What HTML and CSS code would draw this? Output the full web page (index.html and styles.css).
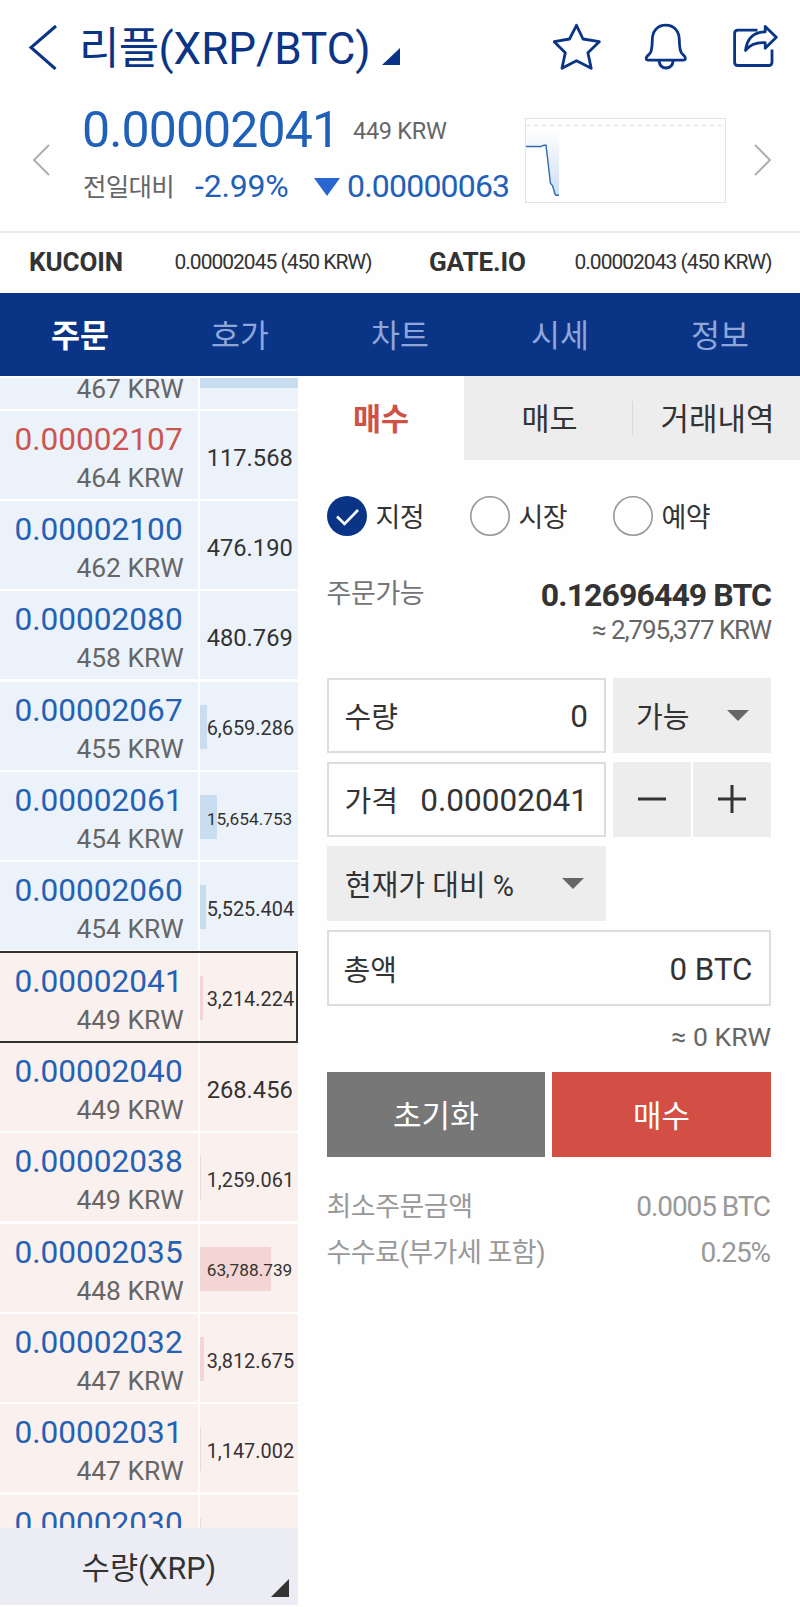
FILE: index.html
```html
<!DOCTYPE html>
<html lang="ko">
<head>
    <meta charset="UTF-8">
    <meta name="viewport" content="width=device-width, initial-scale=1.0">
    <title>리플(XRP/BTC)</title>
    <link rel="stylesheet" href="styles.css">
</head>
<body>

<header class="topbar">
    <svg class="back" width="30" height="46" viewBox="0 0 30 46"><path d="M28 2L3 23.5L27.500 45"/></svg>
    <h1>리플<span>(XRP/BTC)</span></h1>
    <svg class="corner" width="18" height="17" viewBox="0 0 18 17"><path d="M18 0V17H0Z"/></svg>
    <div class="actions">
        <svg width="48" height="48" viewBox="0 0 48 48"><path d="M23.500 2.300L30 16L46.300 18.700L34.900 29.700L38.200 45.300L23.500 37.700L9 45.300L12.300 29.700L1.200 18.700L16.500 16Z"/></svg>
        <svg width="48" height="48" viewBox="0 0 48 48"><path d="M23.700 2.200C15.500 2.200 10.500 8 10.300 16.500C10.200 23 9.900 27.500 8.200 30C6.500 32.300 4.200 33.300 4.200 35.300C4.200 36.700 5 37.200 6.500 37.200H41C42.500 37.200 43.400 36.700 43.400 35.300C43.400 33.300 41.200 32.300 39.500 30C37.800 27.500 37.400 23 37.300 16.500C37.100 8 31.900 2.200 23.700 2.200Z"/><path d="M17 37.500C17.500 42 20 45 24 45C28 45 30.700 42 31.200 37.500"/></svg>
        <svg width="48" height="48" viewBox="0 0 48 48"><path d="M25.500 7.200H6C3.600 7.200 2.600 8.200 2.600 10.500V39.200C2.600 41.500 3.600 42.500 6 42.500H36.500C38.900 42.500 40 41.500 40 39.200V26.500"/><path d="M13.500 27.500C15 15.500 22 9 33.200 8.800V3.500L44.300 14.300L33.200 25.300V19.700C24.500 19.200 18 21.500 13.500 27.500Z"/></svg>
    </div>
</header>

<section class="ticker">
    <svg class="arrow" width="18" height="32" viewBox="0 0 18 32"><path d="M17 1L2 16L17 31"/></svg>
    <div class="info">
        <div class="line">
            <span class="now">0.00002041</span>
            <span class="krw">449 KRW</span>
        </div>
        <div class="line second">
            <span class="label">전일대비</span>
            <span class="rate">-2.99%</span>
            <svg width="26" height="18" viewBox="0 0 26 18"><path d="M0 0H26L13 18Z"/></svg>
            <span class="diff">0.00000063</span>
        </div>
    </div>
    <svg class="chart" width="201" height="85" viewBox="0 0 201 85">
        <defs>
            <linearGradient id="fade" x1="0" y1="0" x2="0" y2="1">
                <stop offset="0" stop-color="#ffffff"/>
                <stop offset="1" stop-color="#cddff3"/>
            </linearGradient>
        </defs>
        <path fill="url(#fade)" d="M1 10H34V77H29L27 67L25 65L21 27L17 28H1Z"/>
        <path class="dash" d="M1 7.500H200"/>
        <path class="trend" d="M1 28.500H16L19 27.200H21L25.500 65.500L27.500 67.500L30 76L31 77.300H34"/>
        <rect x="0.500" y="0.500" width="200" height="84"/>
    </svg>
    <svg class="arrow" width="18" height="32" viewBox="0 0 18 32"><path d="M1 1L16 16L1 31"/></svg>
</section>

<section class="compare">
    <div><b>KUCOIN</b><span>0.00002045 (450 KRW)</span></div>
    <div><b>GATE.IO</b><span>0.00002043 (450 KRW)</span></div>
</section>

<nav class="tabs">
    <a class="active">주문</a>
    <a>호가</a>
    <a>차트</a>
    <a>시세</a>
    <a>정보</a>
</nav>

<main class="content">
    <aside class="book">
        <div class="orders">
            <div class="order ask cut">
                <div class="price"><small>467 KRW</small></div>
                <div class="amount"><i style="width: 100%"></i></div>
            </div>
            <div class="order ask up">
                <div class="price"><strong>0.00002107</strong><small>464 KRW</small></div>
                <div class="amount short"><span>117.568</span></div>
            </div>
            <div class="order ask">
                <div class="price"><strong>0.00002100</strong><small>462 KRW</small></div>
                <div class="amount short"><span>476.190</span></div>
            </div>
            <div class="order ask">
                <div class="price"><strong>0.00002080</strong><small>458 KRW</small></div>
                <div class="amount short"><span>480.769</span></div>
            </div>
            <div class="order ask">
                <div class="price"><strong>0.00002067</strong><small>455 KRW</small></div>
                <div class="amount"><i style="width: 7.6%"></i><span>6,659.286</span></div>
            </div>
            <div class="order ask">
                <div class="price"><strong>0.00002061</strong><small>454 KRW</small></div>
                <div class="amount long"><i style="width: 17.4%"></i><span>15,654.753</span></div>
            </div>
            <div class="order ask">
                <div class="price"><strong>0.00002060</strong><small>454 KRW</small></div>
                <div class="amount"><i style="width: 6.2%"></i><span>5,525.404</span></div>
            </div>
            <div class="order bid current">
                <div class="price"><strong>0.00002041</strong><small>449 KRW</small></div>
                <div class="amount"><i style="width: 3%"></i><span>3,214.224</span></div>
            </div>
            <div class="order bid">
                <div class="price"><strong>0.00002040</strong><small>449 KRW</small></div>
                <div class="amount short"><span>268.456</span></div>
            </div>
            <div class="order bid">
                <div class="price"><strong>0.00002038</strong><small>449 KRW</small></div>
                <div class="amount"><i style="width: 0.6%"></i><span>1,259.061</span></div>
            </div>
            <div class="order bid">
                <div class="price"><strong>0.00002035</strong><small>448 KRW</small></div>
                <div class="amount long"><i style="width: 72%"></i><span>63,788.739</span></div>
            </div>
            <div class="order bid">
                <div class="price"><strong>0.00002032</strong><small>447 KRW</small></div>
                <div class="amount"><i style="width: 4%"></i><span>3,812.675</span></div>
            </div>
            <div class="order bid">
                <div class="price"><strong>0.00002031</strong><small>447 KRW</small></div>
                <div class="amount"><i style="width: 0.6%"></i><span>1,147.002</span></div>
            </div>
            <div class="order bid">
                <div class="price"><strong>0.00002030</strong></div>
                <div class="amount"><i style="width: 0.6%"></i></div>
            </div>
        </div>
        <div class="unit">
            <span>수량(XRP)</span>
            <svg width="18" height="18" viewBox="0 0 18 18"><path d="M18 0V18H0Z"/></svg>
        </div>
    </aside>

    <section class="trade">
        <div class="trade-tabs">
            <a class="active">매수</a>
            <a class="sell">매도</a>
            <a class="history">거래내역</a>
        </div>

        <div class="form">
            <div class="types">
                <label class="checked">
                    <svg width="40" height="40" viewBox="0 0 40 40"><circle cx="20" cy="20" r="20"/><path d="M10 20.500L17.500 28L31 14"/></svg>
                    지정
                </label>
                <label>
                    <svg width="40" height="40" viewBox="0 0 40 40"><circle cx="20" cy="20" r="19.200"/></svg>
                    시장
                </label>
                <label>
                    <svg width="40" height="40" viewBox="0 0 40 40"><circle cx="20" cy="20" r="19.200"/></svg>
                    예약
                </label>
            </div>

            <div class="balance">
                <span class="name">주문가능</span>
                <div>
                    <strong>0.12696449 BTC</strong>
                    <small>≈ 2,795,377 KRW</small>
                </div>
            </div>

            <div class="fields">
                <div class="field"><span>수량</span><em>0</em></div>
                <div class="select">
                    <span>가능</span>
                    <svg width="22" height="11" viewBox="0 0 22 11"><path d="M0 0H22L11 11Z"/></svg>
                </div>
                <div class="field"><span>가격</span><em>0.00002041</em></div>
                <div class="steps">
                    <button><svg width="30" height="30" viewBox="0 0 30 30"><path d="M1 15H29"/></svg></button>
                    <button><svg width="30" height="30" viewBox="0 0 30 30"><path d="M1 15H29M15 1V29"/></svg></button>
                </div>
                <div class="select percent">
                    <span>현재가 대비 %</span>
                    <svg width="22" height="11" viewBox="0 0 22 11"><path d="M0 0H22L11 11Z"/></svg>
                </div>
                <div class="field total"><span>총액</span><em>0 BTC</em></div>
            </div>

            <p class="approx">≈ 0 KRW</p>

            <div class="buttons">
                <button class="reset">초기화</button>
                <button class="buy">매수</button>
            </div>

            <dl class="notes">
                <dt>최소주문금액</dt>
                <dd>0.0005 BTC</dd>
                <dt>수수료(부가세 포함)</dt>
                <dd>0.25%</dd>
            </dl>
        </div>
    </section>
</main>

</body>
</html>
```
FILE: styles.css
```css
* {
    margin: 0;
    padding: 0;
    box-sizing: border-box;
}

body {
    width: 800px;
    height: 1607px;
    overflow: hidden;
    background-color: #fefefe;
    color: #333;
    font-family: Roboto, "Noto Sans CJK KR", sans-serif;
}

svg {
    display: block;
    flex-shrink: 0;
}

button {
    border: none;
    font-family: inherit;
}

/* Header */
.topbar {
    display: flex;
    align-items: center;
    height: 98px;
    padding: 0 21px 0 28px;
    color: #0a3586;
}

.topbar .back {
    margin-bottom: 5px;
    fill: none;
    stroke: #0a3586;
    stroke-width: 3;
}

.topbar h1 {
    width: 303px;
    margin-left: 21px;
    font-size: 44px;
    font-weight: 400;
    line-height: 60px;
    letter-spacing: -0.7px;
    white-space: nowrap;
}

.topbar h1 span {
    letter-spacing: 0;
}

.topbar .corner {
    margin-top: 15px;
    fill: #0a3586;
}

.actions {
    display: flex;
    gap: 41.500px;
    margin-left: auto;
    margin-right: -0.500px;
    margin-bottom: 4px;
    fill: none;
    stroke: #0a3586;
    stroke-width: 2.800;
    stroke-linejoin: round;
}

/* Current price */
.ticker {
    display: flex;
    align-items: center;
    height: 135px;
    padding: 0 27px 9px 32px;
    border-bottom: 2px solid #ebebeb;
}

.ticker .arrow {
    fill: none;
    stroke: #b0b0b0;
    stroke-width: 2;
}

.info {
    align-self: flex-start;
    width: 444px;
    margin: 4px 0 0 32px;
    color: #1f60b8;
}

.line {
    display: flex;
    align-items: center;
    height: 56px;
    line-height: 56px;
    white-space: nowrap;
}

.line .now {
    width: 271px;
    font-size: 50px;
    letter-spacing: -0.9px;
}

.line .krw {
    padding-top: 2px;
    font-size: 23.5px;
    letter-spacing: -0.3px;
    color: #666;
}

.line.second {
    height: 44px;
    margin-top: 6px;
    line-height: 44px;
    font-size: 32px;
}

.line .label {
    width: 113px;
    padding: 2px 0 0 1px;
    font-size: 25.500px;
    letter-spacing: -0.7px;
    color: #666;
}

.line .rate {
    width: 119px;
    letter-spacing: -0.2px;
}

.line svg {
    margin-top: 1px;
    fill: #2a66d0;
}

.line .diff {
    margin-left: 7px;
    letter-spacing: -0.8px;
}

.chart rect {
    fill: none;
    stroke: #e3e3e3;
}

.chart .dash {
    stroke: #e3e3e3;
    stroke-dasharray: 4 4;
}

.chart .trend {
    fill: none;
    stroke: #2f6bb3;
    stroke-width: 1.4;
}

.chart {
    margin-left: -1px;
}

.chart + .arrow {
    margin-left: 28px;
}

/* Other exchanges */
.compare {
    display: flex;
    height: 60px;
    padding-bottom: 2px;
}

.compare div {
    display: flex;
    align-items: center;
    justify-content: space-between;
    width: 400px;
    padding: 0 28.500px 0 29px;
}

.compare b {
    font-size: 26px;
    letter-spacing: -0.1px;
}

.compare span {
    font-size: 21px;
    letter-spacing: -1px;
}

/* Navigation */
.tabs {
    display: flex;
    height: 82.500px;
    background-color: #0a3586;
}

.tabs a {
    flex: 1;
    line-height: 88px;
    text-align: center;
    font-size: 31.500px;
    color: #8ea6d9;
}

.tabs a.active {
    color: #fff;
    font-weight: 700;
}

.content {
    display: flex;
}

/* Order book */
.book {
    width: 298px;
    padding-top: 2px;
}

.orders {
    height: 1150.300px;
    overflow: hidden;
}

.order {
    position: relative;
    display: grid;
    grid-template-columns: 197.700px 98px;
    gap: 2.300px;
    height: 88px;
    margin-bottom: 2.330px;
}

.order.cut {
    height: 31px;
}

.price {
    display: flex;
    flex-direction: column;
    padding: 10px 14px 0 14.500px;
}

.cut .price {
    justify-content: flex-end;
    padding: 0 14px 0 0;
    overflow: hidden;
}

.price strong {
    font-size: 31.600px;
    font-weight: 400;
    line-height: 38px;
    color: #2561b3;
}

.price small {
    font-size: 26.400px;
    line-height: 39px;
    text-align: right;
    color: #666;
}

.up .price strong {
    color: #cd5550;
}

.amount {
    display: flex;
    align-items: center;
    position: relative;
    padding-left: 6.700px;
    font-size: 19.900px;
}

.amount.short {
    font-size: 23.700px;
}

.amount.long {
    font-size: 17.300px;
}

.amount i {
    position: absolute;
    left: 0;
    top: 23px;
    height: 44px;
}

.cut .amount i {
    top: 0;
    height: 10px;
}

.amount span {
    position: relative;
    padding-top: 6px;
}

.amount.long span {
    padding-top: 5px;
}

.ask .price, .ask .amount {
    background-color: #ebf2fa;
}

.ask i {
    background-color: #c9ddf0;
}

.bid .price, .bid .amount {
    background-color: #faf0ee;
}

.bid i {
    background-color: #f3d6d3;
}

/* Frame around the current price */
.current::after {
    content: "";
    position: absolute;
    inset: -2px 0 -2px -2px;
    border: 2px solid #333;
}

.unit {
    position: relative;
    height: 77px;
    background-color: #ecedf4;
    line-height: 82px;
    text-align: center;
    font-size: 30.500px;
}

.unit svg {
    position: absolute;
    right: 9px;
    bottom: 8px;
    fill: #333;
}

/* Trade panel */
.trade {
    width: 502px;
}

.trade-tabs {
    display: flex;
    height: 84px;
    line-height: 87px;
    text-align: center;
    font-size: 30.500px;
}

.trade-tabs a {
    width: 168px;
    background-color: #ededed;
}

.trade-tabs a.active {
    width: 166px;
    background: none;
    font-size: 30.500px;
    font-weight: 700;
    color: #cf5248;
}

.trade-tabs .sell {
    padding-left: 3px;
}

.trade-tabs .history {
    padding-left: 3px;
    font-size: 31px;
    background-image: linear-gradient(#d8d8d8, #d8d8d8);
    background-repeat: no-repeat;
    background-size: 1px 34px;
    background-position: 0 center;
}

.form {
    padding: 36px 29px 0 28.500px;
}

.types {
    display: flex;
}

.types label {
    display: flex;
    align-items: center;
    gap: 9px;
    width: 143px;
    height: 40px;
    font-size: 27px;
    letter-spacing: -0.5px;
}

.types circle {
    fill: none;
    stroke: #999;
    stroke-width: 1.6;
}

.types .checked circle {
    fill: #0a3586;
    stroke: none;
}

.types path {
    fill: none;
    stroke: #fff;
    stroke-width: 2.6;
}

.balance {
    display: flex;
    justify-content: space-between;
    height: 142px;
    padding-top: 38px;
}

.balance .name {
    font-size: 27px;
    line-height: 40px;
    letter-spacing: -0.4px;
    color: #757575;
}

.balance div {
    display: flex;
    flex-direction: column;
    text-align: right;
}

.balance strong {
    font-size: 32px;
    line-height: 42px;
    letter-spacing: -0.9px;
}

.balance small {
    font-size: 26px;
    line-height: 28px;
    letter-spacing: -1.1px;
    color: #666;
}

.fields {
    display: grid;
    grid-template-columns: 279.500px 157.500px;
    grid-auto-rows: 75.300px;
    gap: 9px 7px;
}

.field, .select {
    display: flex;
    align-items: center;
    justify-content: space-between;
    font-size: 29px;
}

.field {
    padding: 0 16px;
    border: 2px solid #ddd;
}

.field em {
    padding-top: 2px;
    font-size: 31.500px;
    font-style: normal;
}

.select {
    padding: 0 22px 0 23px;
    background-color: #ededed;
}

.select svg {
    fill: #666;
}

.percent {
    padding: 0 22px 1px 18.500px;
}

.steps {
    display: flex;
    gap: 2.500px;
}

.steps button {
    display: flex;
    align-items: center;
    justify-content: center;
    flex: 1;
    background-color: #ededed;
}

.steps path {
    stroke: #333;
    stroke-width: 3;
}

.total {
    grid-column: 1 / 3;
    padding-left: 15px;
}

.total em {
    font-size: 31.300px;
}

.approx {
    height: 66.500px;
    padding-top: 11px;
    line-height: 40px;
    text-align: right;
    font-size: 26.500px;
    color: #666;
}

.buttons {
    display: flex;
    gap: 7px;
}

.buttons button {
    flex: 1;
    height: 84.500px;
    padding-bottom: 2px;
    color: #fff;
    font-size: 31px;
}

.reset {
    background-color: #777;
}

.buy {
    background-color: #d34e45;
}

.notes {
    display: grid;
    grid-template-columns: auto auto;
    margin-top: 27px;
    line-height: 46px;
    color: #999;
}

.notes dt {
    font-size: 27px;
    letter-spacing: -0.5px;
}

.notes dd {
    padding-right: 1px;
    text-align: right;
    font-size: 28px;
    letter-spacing: -1.1px;
}
```
